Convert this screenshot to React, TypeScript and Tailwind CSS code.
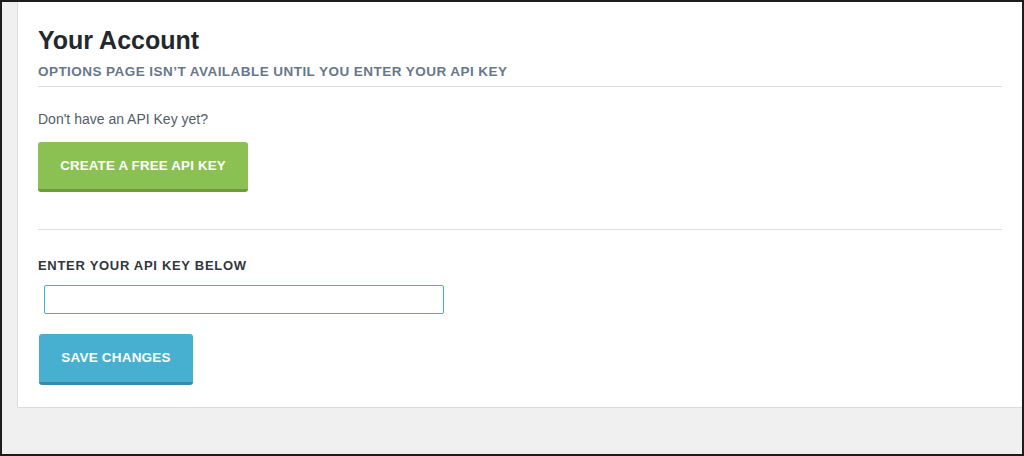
const labelFont = { fontFamily: '"Open Sans", "Liberation Sans", sans-serif' };

export default function App() {
  return (
    <div className="w-[1024px] h-[456px] box-border border-2 border-[#1c1c1c] bg-[#f0f0f0] pl-[15px] font-['Liberation_Sans',Arial,sans-serif] overflow-hidden">
      <div className="h-[406px] bg-white border-l border-b border-[#dcdcdc] pl-[20px] pr-[20px] pt-[23px]">
        <h1 className="text-[25px] leading-[30px] font-bold text-[#23282d]">Your Account</h1>
        <p className="mt-[9px] text-[13.5px] leading-[16px] font-bold tracking-[0.45px] text-[#67778a] uppercase">
          Options page isn’t available until you enter your API key
        </p>
        <div className="mt-[6px] h-px bg-[#dddddd]" />

        <p className="mt-[23px] text-[14px] leading-[18px] text-[#555d66]">Don't have an API Key yet?</p>
        <button className="mt-[14px] w-[210px] h-[50px] rounded-[3px] bg-[#8bc153] border-b-[3px] border-[#6c9c3c] text-white text-[13.3px] font-bold tracking-[0.2px] uppercase">
          Create a free API key
        </button>
        <div className="mt-[37px] h-px bg-[#dddddd]" />

        <p className="mt-[28px] text-[13px] leading-[16px] font-bold tracking-[0.7px] text-[#32373c] uppercase">
          Enter your API key below
        </p>
        <input
          type="text"
          className="mt-[11px] ml-[6px] block w-[400px] h-[29px] border border-[#4aaed0] rounded-[2px] bg-white outline-none"
        />
        <button className="mt-[20px] ml-px w-[154px] h-[51px] rounded-[3px] bg-[#47afcf] border-b-[3px] border-[#3a8aa5] text-white text-[13.5px] font-bold tracking-[0.2px] uppercase">
          Save changes
        </button>
      </div>
    </div>
  );
}
